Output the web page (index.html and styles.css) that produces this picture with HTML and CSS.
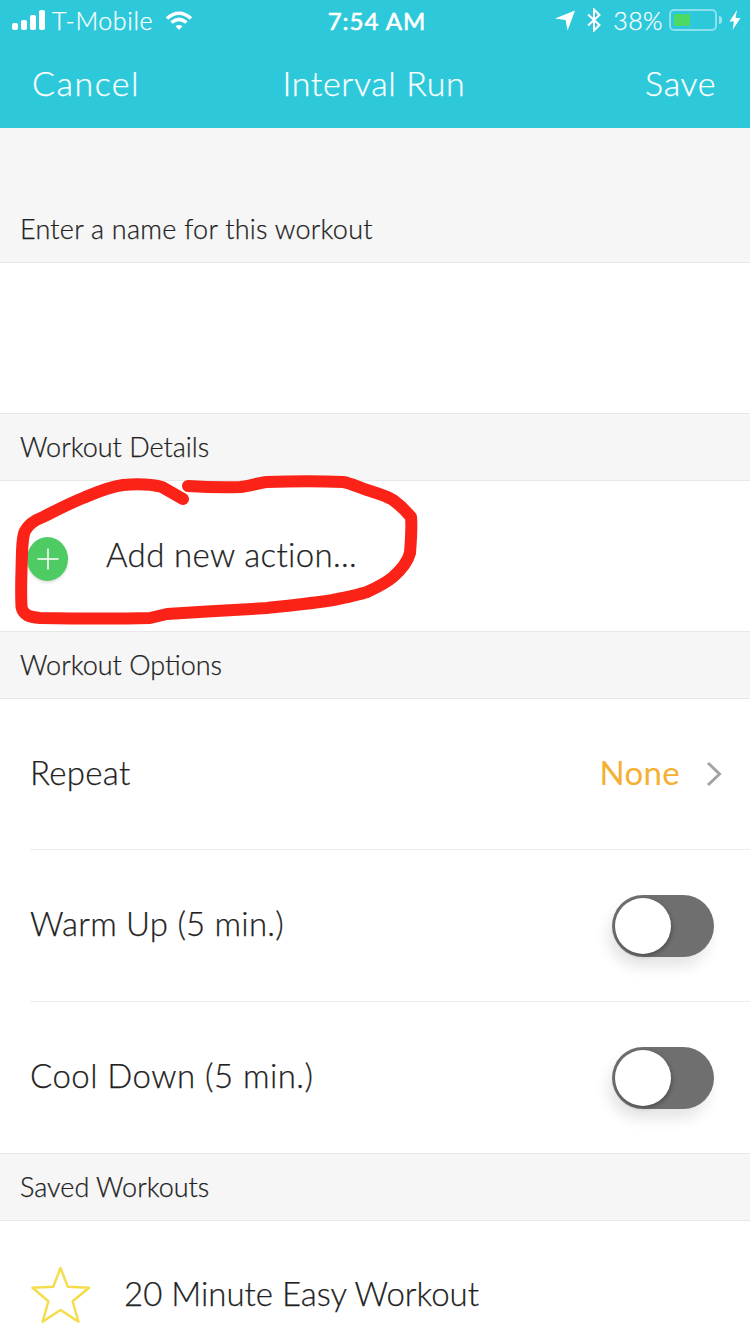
FILE: index.html
```html
<!DOCTYPE html>
<html lang="en">
<head>
<meta charset="utf-8">
<title>Interval Run</title>
<link rel="stylesheet" href="styles.css">
</head>
<body>
<div class="screen">
  <header class="top">
    <div class="status">
      <div class="status-left">
        <svg class="signal" width="33" height="20" viewBox="0 0 33 20"><rect x="0" y="13" width="6" height="7" rx="2"/><rect x="9" y="10" width="6" height="10" rx="2"/><rect x="18" y="5" width="6" height="15" rx="2"/><rect x="27" y="0" width="6" height="20" rx="2"/></svg>
        <span class="carrier">T-Mobile</span>
        <svg class="wifi" width="28" height="21" viewBox="0 0 28 21"><path d="M2 8.500C9.500 1.500 18.500 1.500 26 8.500" /><path d="M6.500 12.500C11.500 8.300 16.500 8.300 21.500 12.500"/><path class="wifi-dot" d="M10.500 16.200C12.800 14.500 15.200 14.500 17.500 16.200L14 20Z"/></svg>
      </div>
      <span class="clock">7:54 AM</span>
      <div class="status-right">
        <svg width="22" height="21" viewBox="0 0 20 20"><path class="fill-white" d="M19.500 0.500L12.500 19.500L10.500 9.500L0.500 8Z"/></svg>
        <svg class="bt" width="16" height="24" viewBox="0 0 16 24"><path d="M2 6.500L13.500 17L8 22.500V1.500L13.500 7L2 17.500"/></svg>
        <span class="pct">38%</span>
        <div class="battery"><div class="battery-level"></div></div>
        <div class="battery-tip"></div>
        <svg class="bolt" width="12" height="20" viewBox="0 0 12 20"><path class="fill-white" d="M8 0L0.500 11.500H5L3.500 20L11.500 8H6.500Z"/></svg>
      </div>
    </div>
    <nav class="nav">
      <span class="nav-left">Cancel</span>
      <span class="nav-title">Interval Run</span>
      <span class="nav-right">Save</span>
    </nav>
  </header>

  <div class="name-head">Enter a name for this workout</div>
  <div class="blank"></div>

  <div class="section">Workout Details</div>
  <div class="add-row">
    <span class="plus"><svg width="22" height="22" viewBox="0 0 22 22"><path d="M11 0.500V21.500M0.500 11H21.500"/></svg></span>
    <span class="label add-label">Add new action...</span>
  </div>

  <div class="section">Workout Options</div>
  <div class="options">
    <div class="row">
      <span class="label">Repeat</span>
      <span class="value label">None<svg class="chev" width="16" height="26" viewBox="0 0 16 26"><path d="M2 2L13.500 13L2 24"/></svg></span>
    </div>
    <div class="row">
      <span class="label warm">Warm Up (5 min.)</span>
      <span class="toggle"><span class="knob"></span></span>
    </div>
    <div class="row">
      <span class="label cool">Cool Down (5 min.)</span>
      <span class="toggle"><span class="knob"></span></span>
    </div>
  </div>

  <div class="section">Saved Workouts</div>
  <div class="saved">
    <svg class="star" width="60" height="60" viewBox="0 0 62 60"><path d="M30.500 2L38 21.500L60 22.500L43 36.500L49 57.500L30.500 45.500L12 57.500L18 36.500L1.500 22.500L23 21.500Z"/></svg>
    <span class="saved-name">20 Minute Easy Workout</span>
  </div>

  <svg class="scribble" width="430" height="150" viewBox="0 0 430 150"><path d="M183 24L162 12C150 9 135 9 123 10C108 12 95 18 83 23C68 29 55 36 43 42C35 45 28 50 25 56C22 62 22 75 21.500 95C21 112 21 122 21.500 132C23 140 29 142 40 143C70 143.500 110 144 150 143L167 139C200 137 235 135 267 133C295 130 315 128 333 125C348 122 358 120 367 117C378 112 386 108 393 102C402 94 408 86 410 78C411 65 412 52 411 42C405 35 400 30 393 25C385 20 376 18 367 15C358 12 350 8 343 7C320 6 295 6 267 7C258 8 250 11 240 12C222 12.500 205 12 188 11"/></svg>
</div>
</body>
</html>
```

FILE: styles.css
```css
* {
  box-sizing: border-box;
}

html,
body {
  margin: 0;
  padding: 0;
}

body {
  width: 750px;
  height: 1334px;
  overflow: hidden;
  background: #ffffff;
  font-family: Lato, "Open Sans", sans-serif;
  font-weight: 300;
  color: #222222;
  -webkit-text-stroke: 0.25px currentColor;
}

.screen {
  position: relative;
  width: 750px;
  height: 1334px;
  overflow: hidden;
}

.top {
  height: 128px;
  background: #2dc9db;
  color: #ffffff;
}

.status {
  height: 40px;
  padding: 0 9px 0 12px;
  display: flex;
  align-items: center;
  justify-content: space-between;
  position: relative;
  font-size: 25px;
  font-weight: 400;
}

.status-left,
.status-right {
  display: flex;
  align-items: center;
}

.status svg {
  flex: none;
}

.signal {
  fill: #ffffff;
  margin-right: 7px;
}

.carrier {
  letter-spacing: 0.6px;
  font-weight: 300;
}

.wifi {
  margin-left: 12px;
  fill: none;
  stroke: #ffffff;
  stroke-width: 3.5;
}

.wifi-dot {
  fill: #ffffff;
  stroke: none;
}

.clock {
  position: absolute;
  left: 4px;
  right: 0;
  text-align: center;
  font-size: 24px;
  font-weight: 400;
  letter-spacing: 1px;
  -webkit-text-stroke: 0.6px #ffffff;
}

.status-right {
  position: relative;
}

.fill-white {
  fill: #ffffff;
}

.bt {
  margin-left: 10px;
  fill: none;
  stroke: #ffffff;
  stroke-width: 2;
}

.pct {
  margin-left: 11px;
  font-weight: 300;
  letter-spacing: 0.4px;
}

.battery {
  width: 48px;
  height: 22px;
  margin-left: 6px;
  padding: 3px;
  border: 2px solid rgba(255, 255, 255, 0.45);
  border-radius: 5px;
}

.battery-level {
  width: 16px;
  height: 100%;
  background: #4cd964;
}

.battery-tip {
  width: 3px;
  height: 8px;
  margin-left: 2px;
  border-radius: 0 3px 3px 0;
  background: rgba(255, 255, 255, 0.5);
}

.bolt {
  margin-left: 7px;
}

.nav {
  display: grid;
  grid-template-columns: 1fr auto 1fr;
  align-items: center;
  height: 88px;
  padding: 0 34px 2px 32px;
  font-size: 34px;
  line-height: 44px;
  letter-spacing: 0.6px;
}

.nav-left {
  letter-spacing: 1.5px;
}

.nav-right {
  text-align: right;
}

.name-head {
  height: 135px;
  padding: 85px 20px 0;
  background: #f6f6f6;
  border-bottom: 1px solid #e8e8e8;
  font-size: 27px;
  line-height: 32px;
  letter-spacing: 0.25px;
}

.blank {
  height: 150px;
  background: #ffffff;
}

.section {
  height: 68px;
  padding: 0 20px 2px;
  display: flex;
  align-items: center;
  background: #f6f6f6;
  border-top: 1px solid #e8e8e8;
  border-bottom: 1px solid #e8e8e8;
  font-size: 27px;
  letter-spacing: 0;
}

.add-row {
  height: 150px;
  display: flex;
  align-items: center;
  gap: 38px;
  padding-left: 27px;
  font-size: 33px;
}

.add-label {
  letter-spacing: 0.35px;
}

.plus {
  width: 41px;
  height: 44px;
  margin-top: 6px;
  border-radius: 50%;
  background: #4fcb63;
  box-shadow: 0 2px 3px rgba(0, 0, 0, 0.12);
  display: flex;
  align-items: center;
  justify-content: center;
}

.plus path {
  fill: none;
  stroke: #ffffff;
  stroke-width: 1.6;
}

.options {
  padding-left: 30px;
}

.label {
  margin-bottom: 5px;
}

.warm {
  letter-spacing: 0.2px;
}

.cool {
  letter-spacing: 0.45px;
}

.row {
  height: 152px;
  padding-right: 36px;
  display: flex;
  align-items: center;
  justify-content: space-between;
  border-bottom: 1px solid #eeeeee;
  font-size: 33px;
  letter-spacing: 0.3px;
}

.row:first-child {
  height: 151px;
}

.row:last-child {
  height: 151px;
  border-bottom: 0;
}

.value {
  display: flex;
  align-items: center;
  gap: 26px;
  margin-right: -8px;
  color: #f5b032;
  font-weight: 400;
  -webkit-text-stroke: 0;
}

.chev {
  fill: none;
  stroke: #a3a3a3;
  stroke-width: 3;
  margin-top: 5px;
}

.toggle {
  position: relative;
  display: block;
  width: 102px;
  height: 62px;
  border-radius: 31px;
  background: #6f6f6f;
  box-shadow: -4px 10px 14px rgba(0, 0, 0, 0.1);
}

.knob {
  position: absolute;
  top: 3px;
  left: 3px;
  width: 56px;
  height: 56px;
  border-radius: 50%;
  background: #ffffff;
  box-shadow: 1px 2px 4px rgba(0, 0, 0, 0.3);
}

.saved {
  height: 150px;
  padding-left: 31px;
  display: flex;
  align-items: flex-start;
  gap: 33px;
  font-size: 33px;
}

.saved-name {
  padding-top: 51px;
  line-height: 42px;
  letter-spacing: 0;
}

.star {
  margin-top: 44px;
  fill: none;
  stroke: #f5dc4b;
  stroke-width: 2.500;
  stroke-linejoin: round;
}

.scribble {
  position: absolute;
  left: 0;
  top: 475px;
  fill: none;
  stroke: #fb2317;
  stroke-width: 12;
  stroke-linecap: round;
  stroke-linejoin: round;
}
```
